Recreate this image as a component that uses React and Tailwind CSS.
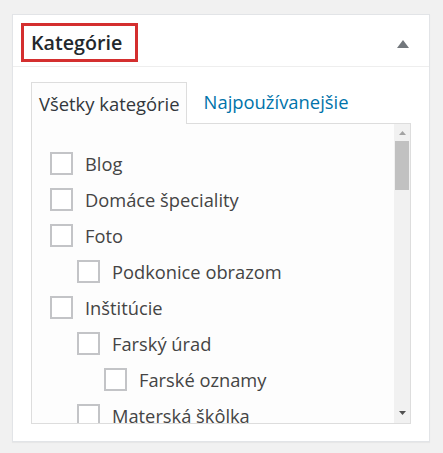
export default function App() {
  const items = [
    { label: "Blog", level: 0 },
    { label: "Domáce špeciality", level: 0 },
    { label: "Foto", level: 0 },
    { label: "Podkonice obrazom", level: 1 },
    { label: "Inštitúcie", level: 0 },
    { label: "Farský úrad", level: 1 },
    { label: "Farské oznamy", level: 2 },
    { label: "Materská škôlka", level: 1 },
  ];
  const indent = ["pl-[18px]", "pl-[45px]", "pl-[72px]"];
  return (
    <div className="w-[443px] h-[453px] bg-[#f1f1f1] pt-[14px] pl-[12px] font-['Open_Sans',sans-serif]">
      <div className="w-[418px] h-[428px] bg-white border border-[#e2e4e7] shadow-[0_1px_1px_rgba(0,0,0,0.04)] flex flex-col">
        <div className="h-[52px] border-b border-[#eeeeee] flex items-start justify-between pl-[8px] pr-[20px] pt-[8px]">
          <div className="h-[39px] w-[117px] border-[3px] border-[#d42f2f] flex items-center pl-[7px]">
            <span className="text-[19.7px] font-semibold text-[#23282d]">Kategórie</span>
          </div>
          <svg width="12" height="8" viewBox="0 0 12 8" className="mt-[17px]">
            <path d="M6 0 L12 8 L0 8 Z" fill="#72777c" />
          </svg>
        </div>
        <div className="px-[18px] pt-[14px]">
          <div className="flex items-end h-[42px]">
            <div className="h-[42px] pl-[7px] pr-[6px] border border-b-0 border-[#dddddd] bg-[#fdfdfd] flex items-center relative top-[1px] z-10">
              <span className="text-[18.4px] text-[#32373c]">Všetky kategórie</span>
            </div>
            <div className="h-[42px] pl-[17px] flex items-center">
              <span className="text-[18.4px] text-[#0073aa]">Najpoužívanejšie</span>
            </div>
          </div>
          <div className="h-[301px] border border-[#dddddd] bg-[#fdfdfd] flex overflow-hidden">
            <div className="flex-1 pt-[28px] overflow-hidden">
              {items.map((it, i) => (
                <div key={i} className={"h-[36px] flex items-start gap-[12px] " + indent[it.level]}>
                  <div className="w-[23px] h-[23px] border-2 border-[#c3c4c7] bg-white shrink-0" />
                  <span className="text-[18.3px] leading-[23px] text-[#444444] whitespace-nowrap">{it.label}</span>
                </div>
              ))}
            </div>
            <div className="w-[16px] bg-[#f1f1f1] flex flex-col items-center">
              <svg width="7" height="4" viewBox="0 0 7 4" className="mt-[7px]">
                <path d="M3.5 0 L7 4 L0 4 Z" fill="#a3a3a3" />
              </svg>
              <div className="w-[14px] h-[49px] bg-[#c1c1c1] mt-[6px]" />
              <div className="flex-1" />
              <svg width="7" height="4" viewBox="0 0 7 4" className="mb-[8px]">
                <path d="M0 0 L7 0 L3.5 4 Z" fill="#505050" />
              </svg>
            </div>
          </div>
        </div>
      </div>
    </div>
  );
}
